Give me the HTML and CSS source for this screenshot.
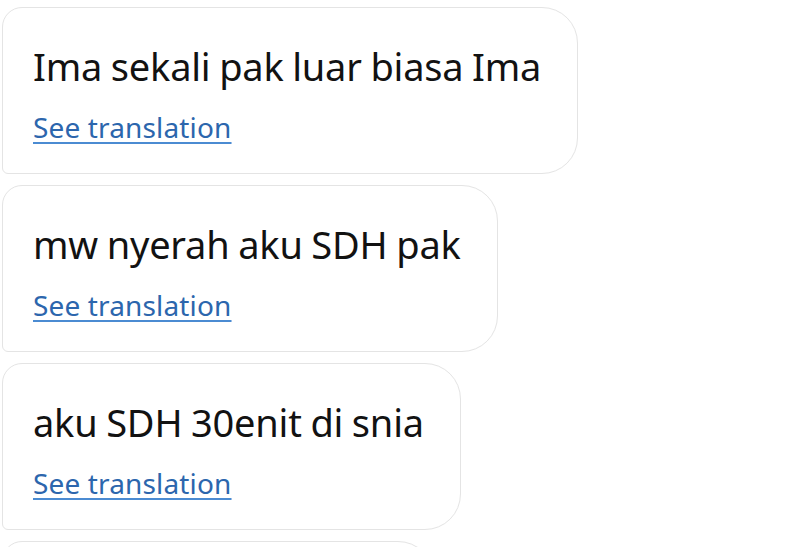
FILE: index.html
```html
<!doctype html>
<html>
<head>
<meta charset="utf-8">
<title>Chat</title>
<link rel="stylesheet" href="styles.css">
</head>
<body>
	<div class="chat">
		<div class="msg">
			<p class="msg_text">Ima sekali pak luar biasa Ima</p>
			<a href="javascript:;" class="msg_tr">See translation</a>
		</div>
		<div class="msg">
			<p class="msg_text">mw nyerah aku SDH pak</p>
			<a href="javascript:;" class="msg_tr">See translation</a>
		</div>
		<div class="msg">
			<p class="msg_text">aku SDH 30enit di snia</p>
			<a href="javascript:;" class="msg_tr">See translation</a>
		</div>
		<!-- next message, only its top edge shows -->
		<div class="msg msg_next"></div>
	</div>
</body>
</html>
```

FILE: styles.css
```css
*{margin:0; padding:0;}
html,body{background:#fff; overflow:hidden;}
body{font-family:"Noto Sans","DejaVu Sans",sans-serif; color:#121212;}
.chat{display:flex; flex-direction:column; align-items:flex-start; gap:11px; padding:7px 0 0 2px;}
.msg{display:flex; flex-direction:column; align-items:flex-start; height:167px; padding:0 36px 0 30px; box-sizing:border-box; background:#fff; border:1px solid #e4e4e4; border-radius:20px 36px 36px 6px;}
.msg_next{width:432px;}
.msg_text{font-size:38px; line-height:52px; margin-top:32px; letter-spacing:-0.2px; word-spacing:-1px; white-space:nowrap;}
.msg_tr{font-size:28px; line-height:36px; margin-top:17px; letter-spacing:0.15px; color:#2c66ad; text-decoration:underline; text-decoration-color:#4b8bd2; text-decoration-thickness:2px; text-underline-offset:4px;}
```
